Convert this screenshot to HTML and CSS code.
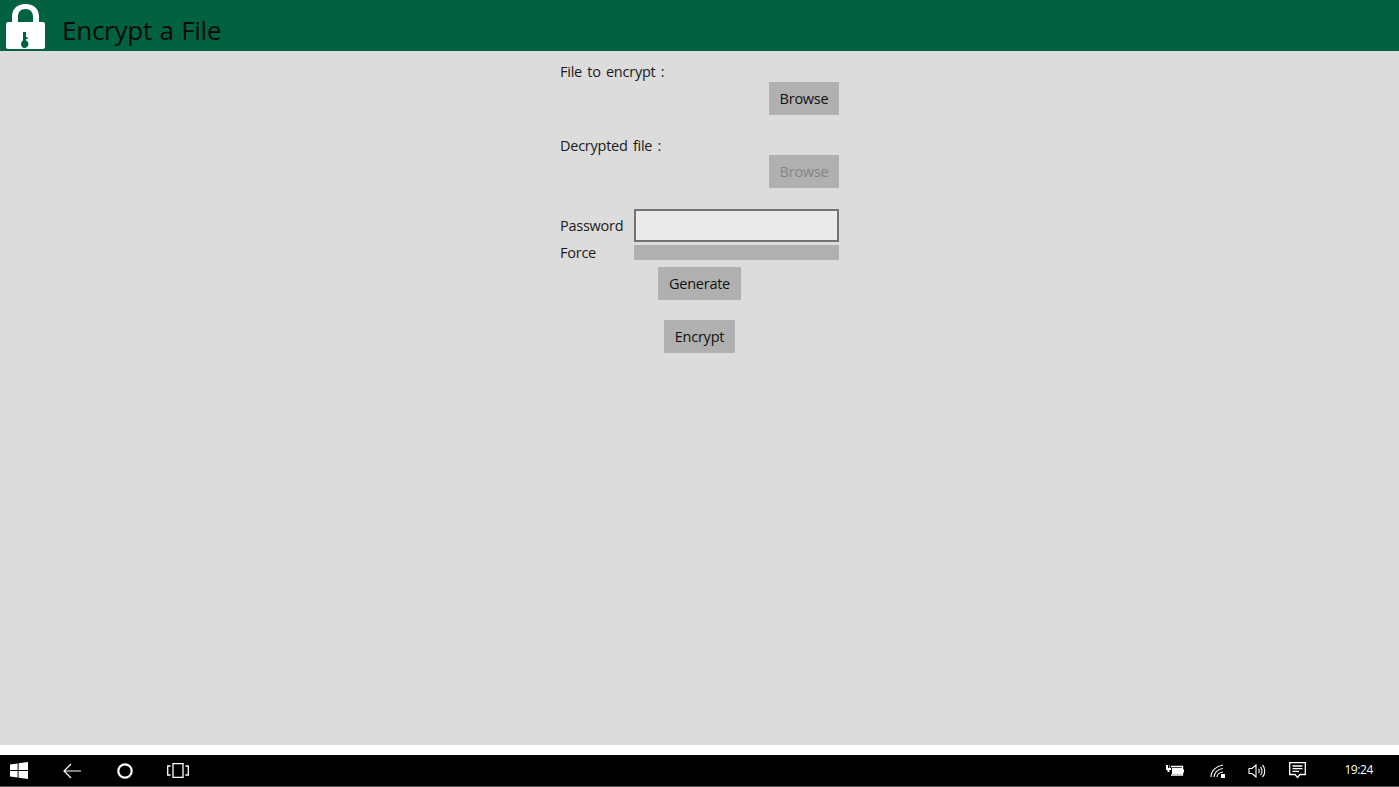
FILE: index.html
```html
<!DOCTYPE html>
<html lang="en">
<head>
<meta charset="utf-8">
<title>Encrypt a File</title>
<link rel="stylesheet" href="styles.css">
</head>
<body>
<div class="app">
  <header class="header">
    <svg class="lock" width="40" height="46" viewBox="0 0 40 46">
      <path class="lock-body" fill-rule="evenodd" d="M2 19H6V14C6 6 11 1 19.500 1S33 6 33 14V19H37C38 19 39 20 39 21V44C39 45 38 46 37 46H2C1 46 0 45 0 44V21C0 20 1 19 2 19ZM12 19H27V14C27 9 24.500 6 19.500 6S12 9 12 14Z"/>
      <path class="lock-key" d="M17 29H20V34H21.500V36H20V37.500C21.500 38 22.500 39.500 22.500 41C22.500 43 20.800 45 18.500 45S15 43 15 41C15 39.500 16 38 17 37.500Z"/>
    </svg>
    <h1 class="title">Encrypt a File</h1>
  </header>
  <main class="main">
    <form class="form">
      <div class="label">File to encrypt :</div>
      <div class="right"><button type="button" class="btn browse">Browse</button></div>
      <div class="label second">Decrypted file :</div>
      <div class="right"><button type="button" class="btn browse disabled">Browse</button></div>
      <div class="pw-row">
        <span class="pw-label">Password</span>
        <div class="input"></div>
      </div>
      <div class="force-row">
        <span class="pw-label">Force</span>
        <div class="bar"></div>
      </div>
      <div class="center gen"><button type="button" class="btn">Generate</button></div>
      <div class="center enc"><button type="button" class="btn">Encrypt</button></div>
    </form>
  </main>
  <div class="strip"></div>
  <footer class="taskbar">
    <div class="nav">
      <svg class="ico win" width="18" height="17" viewBox="0 0 18 17"><path d="M0 2.600 7.600 1.400V8H0ZM8.600 1.200 18 0V8H8.600ZM0 9H7.600V15.600L0 14.400ZM8.600 9H18V17L8.600 15.800Z"/></svg>
      <svg class="ico back" width="18" height="16" viewBox="0 0 18 16"><path d="M8 1 1 8l7 7M1 8h17"/></svg>
      <svg class="ico cortana" width="16" height="16" viewBox="0 0 16 16"><circle cx="8" cy="8" r="6.700"/></svg>
      <svg class="ico task" width="22" height="15" viewBox="0 0 22 15"><path d="M6 .7H16V14.300H6ZM3.500 3H.7V12H3.500M18.500 3H21.300V12H18.500"/></svg>
    </div>
    <div class="tray">
      <svg class="ico batt" width="18" height="13" viewBox="0 0 18 13"><path d="M5 2.500H16.500V11H5"/><path class="fill" d="M6 4H16V10H6ZM17 5.500H18V8.500H17ZM0 1H2V4H3V1H3.500V4H5V6H3.500V8H1.500V6H0Z"/></svg>
      <svg class="ico wifi" width="16" height="14" viewBox="0 0 16 14"><path d="M1 13C1 7 6 2 13 1M4 13C4 9 8 5 13 4.500M7 13C7 11 9 8.500 13 8"/><path class="fill" d="M11 10H15V14H11Z"/></svg>
      <svg class="ico vol" width="18" height="14" viewBox="0 0 18 14"><path d="M1 4.500H4L8 1V13L4 9.500H1ZM10.500 5C11.500 6 11.500 8 10.500 9M12.500 3C14.500 5 14.500 9 12.500 11M14.500 1C17.500 4 17.500 10 14.500 13"/></svg>
      <svg class="ico note" width="17" height="17" viewBox="0 0 17 17"><path d="M.7.7H16.300V12.500H11L8.500 15.500 6 12.500H.7ZM3.500 4H13.500M3.500 6.700H13.500M3.500 9.300H10"/></svg>
      <span class="clock">19:24</span>
    </div>
  </footer>
</div>
</body>
</html>
```
FILE: styles.css
```css
* { box-sizing: border-box; }
html, body { margin: 0; padding: 0; height: 100%; background: #fff; overflow: hidden; }
body { font-family: "Open Sans", "Noto Sans", "Liberation Sans", sans-serif; color: #1a1a1a; }
.app { display: flex; flex-direction: column; height: 787px; }
.header { height: 51px; background: #006241; display: flex; align-items: flex-start; flex: none; }
.lock { margin: 3px 0 0 6px; flex: none; }
.lock-body { fill: #fff; }
.lock-key { fill: #006241; }
.title { margin: 12px 0 0 16px; font-size: 26px; font-weight: 400; line-height: 36px; color: #0a0a0a; letter-spacing: -.25px; word-spacing: 1px; }
.main { height: 694px; background: #dcdcdc; flex: none; display: flex; justify-content: center; }
.form { width: 279px; padding-top: 11px; font-size: 14.500px; letter-spacing: -.25px; }
.label { line-height: 20px; height: 20px; word-spacing: 1.800px; }
.second { margin-top: 21px; height: 19px; }
.right { display: flex; justify-content: flex-end; }
.btn { display: block; height: 33px; padding: 0 10.700px; margin: 0; border: 0; background: #b0b0b0; color: #111; font: inherit; letter-spacing: inherit; }
.browse { width: 70px; padding: 0; }
.disabled { color: #858585; }
.pw-row, .force-row { display: flex; align-items: center; justify-content: space-between; }
.pw-row { margin-top: 21px; height: 33px; }
.force-row { margin-top: 3px; height: 15px; }
.input { width: 205px; height: 33px; border: 2px solid #737373; background: #ebebeb; }
.bar { width: 205px; height: 15px; background: #b0b0b0; }
.center { display: flex; justify-content: center; }
.gen { margin-top: 7px; }
.enc { margin-top: 20px; }
.strip { height: 10px; background: #fff; flex: none; }
.taskbar { height: 31px; background: #000; flex: none; display: flex; justify-content: space-between; align-items: center; color: #fff; box-shadow: 0 1px 0 #555; }
.nav { display: flex; align-items: center; padding-left: 10px; }
.tray { display: flex; align-items: center; }
.ico { display: block; flex: none; fill: none; stroke: #fff; stroke-width: 1.300; }
.ico .fill { fill: #fff; stroke: none; }
.win { fill: #fff; stroke: none; }
.back { margin-left: 35px; stroke-width: 1.200; }
.cortana { margin-left: 36px; stroke-width: 2.200; }
.task { margin-left: 34px; }
.wifi { margin-left: 26px; stroke-width: 1.100; }
.vol { margin-left: 22px; stroke-width: 1.100; }
.note { margin-left: 23px; }
.clock { margin: 0 26px 0 38px; font-size: 12px; letter-spacing: -.4px; line-height: 16px; position: relative; top: -1px; }
```
